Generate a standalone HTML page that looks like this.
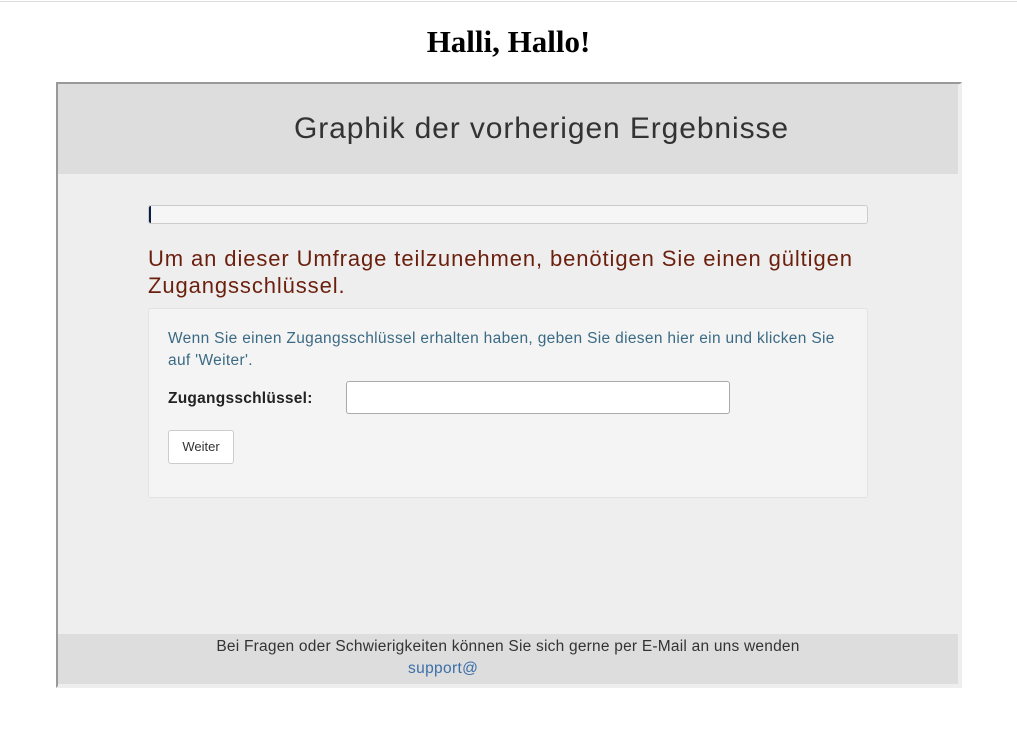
<!DOCTYPE html>
<html><head><meta charset="utf-8"><style>
body{margin:0;width:1017px;height:740px;background:#fff;position:relative;font-family:"Liberation Sans",sans-serif;overflow:hidden}
.topline{position:absolute;left:0;top:1px;width:1017px;height:1px;background:#ddd}
h1{position:absolute;left:0;width:1017px;top:24px;margin:0;text-align:center;font-family:"Liberation Serif",serif;font-size:31px;font-weight:bold;line-height:36px;color:#000}
.box{position:absolute;left:56px;top:82px;width:902px;height:602px;border-top:2px solid #999;border-left:2px solid #999;border-right:2px solid #eee;border-bottom:2px solid #eee;background:#eee}
.hdr{position:absolute;left:0;top:0;width:900px;height:90px;background:#ddd}
.hdr div{position:absolute;left:236px;top:27px;font-size:30px;color:#333;line-height:36px;white-space:nowrap;letter-spacing:0.9px}
.prog{position:absolute;left:90px;top:121px;width:718px;height:17px;border:1px solid #ccc;border-radius:3px;background:#f6f6f6}
.prog i{position:absolute;left:0;top:0;width:2px;height:17px;background:#0a1e4a;border-radius:3px 0 0 3px}
.err{position:absolute;left:90px;top:161px;font-size:22px;line-height:27px;color:#6b1f0d;white-space:nowrap;letter-spacing:0.9px}
.panel{position:absolute;left:90px;top:224px;width:718px;height:188px;border:1px solid #e3e3e3;border-radius:3px;background:#f4f4f4}
.info{position:absolute;left:19px;top:19px;font-size:15.5px;line-height:22px;color:#3b6a83;white-space:nowrap;letter-spacing:0.33px}
.lbl{position:absolute;left:19px;top:81px;font-size:15.5px;font-weight:bold;color:#222;letter-spacing:0.25px}
.inp{position:absolute;left:197px;top:72px;width:382px;height:31px;border:1px solid #aaa;border-radius:3px;background:#fff}
.btn{position:absolute;left:19px;top:121px;width:64px;height:32px;border:1px solid #ccc;border-radius:3px;background:#fff;font-size:13px;color:#333;text-align:center;line-height:32px}
.ftr{position:absolute;left:0;top:550px;width:900px;height:50px;background:#ddd}
.ftr .t{position:absolute;left:0;width:900px;top:3px;text-align:center;font-size:15.5px;color:#333;line-height:20px;letter-spacing:0.22px}
.ftr .l{position:absolute;left:350px;top:25px;font-size:15.5px;color:#3a6fa8;line-height:20px;letter-spacing:0.35px}
</style></head><body>
<div class="topline"></div>
<h1>Halli, Hallo!</h1>
<div class="box">
<div class="hdr"><div>Graphik der vorherigen Ergebnisse</div></div>
<div class="prog"><i></i></div>
<div class="err">Um an dieser Umfrage teilzunehmen, benötigen Sie einen gültigen<br>Zugangsschlüssel.</div>
<div class="panel">
<div class="info">Wenn Sie einen Zugangsschlüssel erhalten haben, geben Sie diesen hier ein und klicken Sie<br>auf 'Weiter'.</div>
<div class="lbl">Zugangsschlüssel:</div>
<div class="inp"></div>
<div class="btn">Weiter</div>
</div>
<div class="ftr"><div class="t">Bei Fragen oder Schwierigkeiten können Sie sich gerne per E-Mail an uns wenden</div><div class="l">support@</div></div>
</div>
</body></html>
